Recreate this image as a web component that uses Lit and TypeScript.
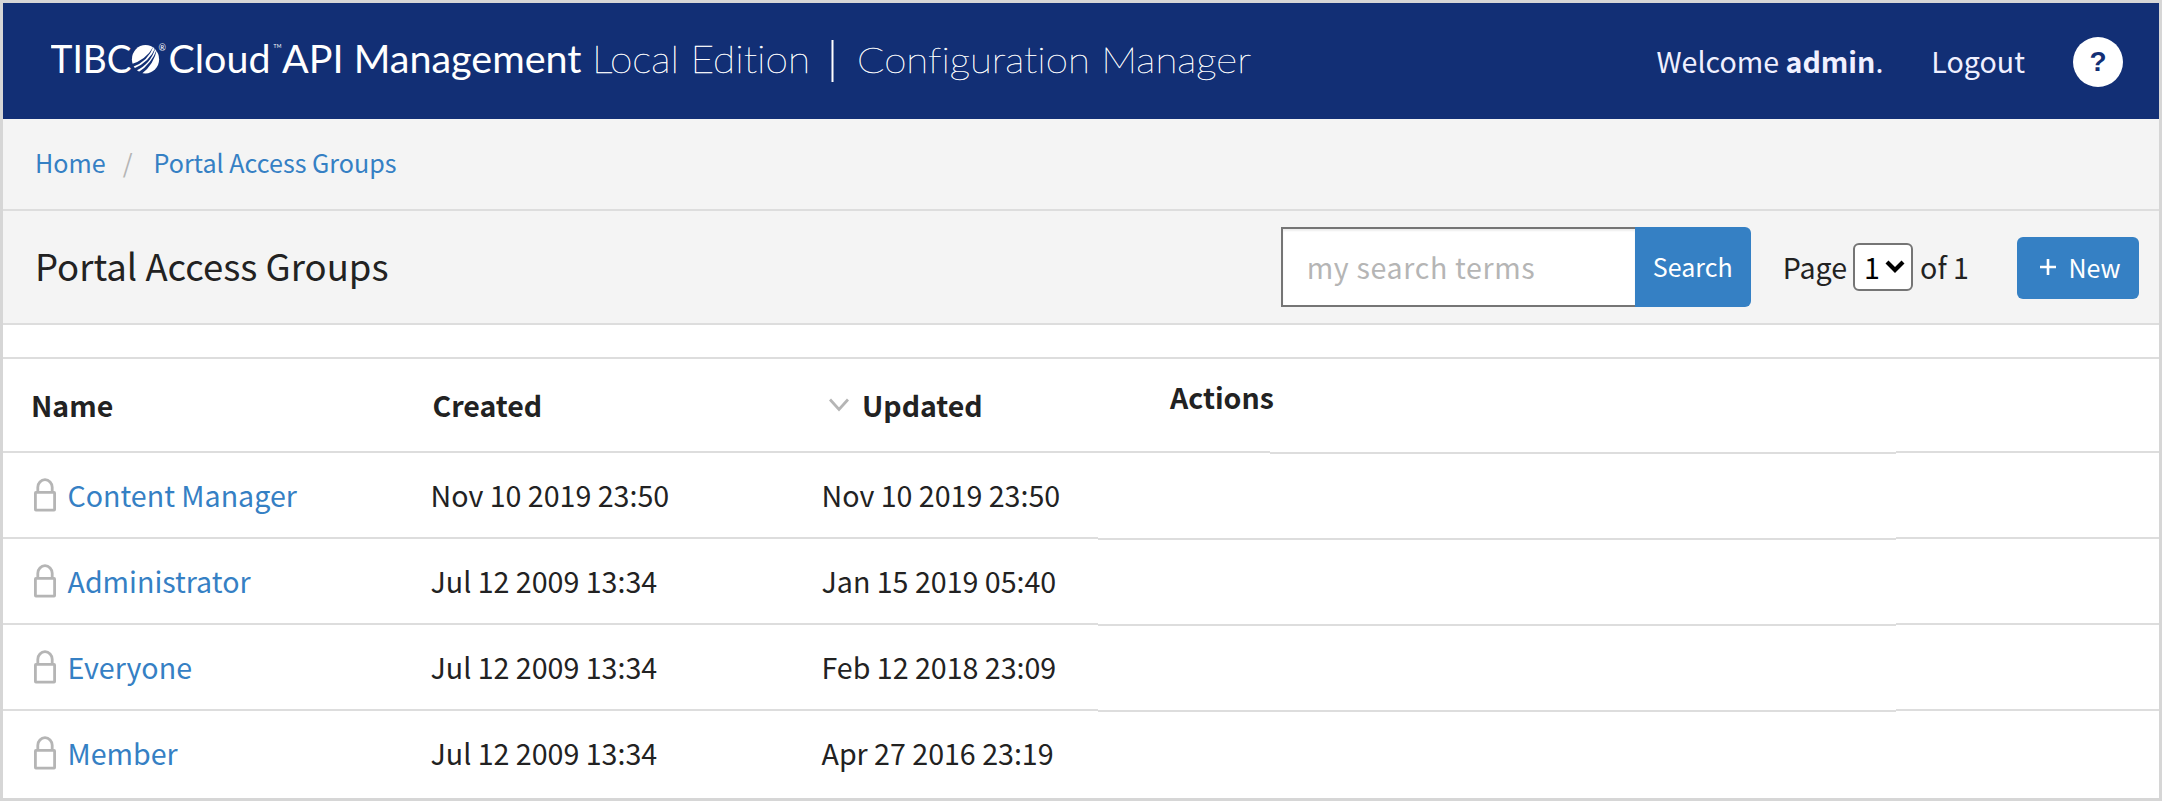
import { LitElement, html, css, svg } from "lit";
import { customElement } from "lit/decorators.js";

interface Row { name: string; created: string; updated: string }

const ROWS: Row[] = [
  { name: "Content Manager", created: "Nov 10 2019 23:50", updated: "Nov 10 2019 23:50" },
  { name: "Administrator", created: "Jul 12 2009 13:34", updated: "Jan 15 2019 05:40" },
  { name: "Everyone", created: "Jul 12 2009 13:34", updated: "Feb 12 2018 23:09" },
  { name: "Member", created: "Jul 12 2009 13:34", updated: "Apr 27 2016 23:19" },
];

@customElement("brand-logo")
export class BrandLogo extends LitElement {
  static styles = css`
    :host { display: block; margin-top: 4px; }
    svg { display: block; }
    .word { font-family: Lato, "Open Sans", sans-serif; fill: #fff; font-size: 38px; font-variant-ligatures: none; }
    .regular { font-weight: 400; }
    .thin { font-weight: 100; stroke: #fff; stroke-width: 0.45px; }
    .product { font-size: 36px; stroke-width: 0.4px; }
    .mark { font-family: Lato, sans-serif; fill: #fff; }
  `;
  render() {
    return html`<svg width="1220" height="60" viewBox="0 0 1220 60" role="img">
      ${svg`
      <text class="word regular" x="-0.500" y="40" textLength="81" lengthAdjust="spacingAndGlyphs">TIBC</text>
      <ellipse cx="94.500" cy="26.300" rx="13.600" ry="14.200" fill="#fff"/>
      <path d="M79.500 31.500 Q95 27 102.500 13.500 Q97 28.500 81.500 34 Z M82.500 35.800 Q98.500 29 104.500 14.500 Q100 31 84.500 38 Z M87 39.500 Q100.500 31 106 16 Q103 31.500 90.500 41 Z" fill="#122f75"/>
      <text class="mark" x="107.500" y="17.500" font-size="9">®</text>
      <text class="word regular" x="117.500" y="40" textLength="102" lengthAdjust="spacingAndGlyphs">Cloud</text>
      <text class="mark" x="222.500" y="15" font-size="5" textLength="8">TM</text>
      <text class="word regular" x="231" y="40" textLength="299.500" lengthAdjust="spacingAndGlyphs">API Management</text>
      <text class="word thin" x="541" y="40" textLength="218" lengthAdjust="spacingAndGlyphs">Local Edition</text>
      <rect x="780.500" y="7" width="2" height="42" fill="#fff"/>
      <text class="word thin product" x="806" y="40" textLength="394" lengthAdjust="spacingAndGlyphs">Configuration Manager</text>
      `}
    </svg>`;
  }
}

@customElement("app-root")
export class AppRoot extends LitElement {
  static styles = css`
    :host { display: block; box-sizing: border-box; width: 2162px; height: 801px; border: 3px solid #d6d6d6;
      background: #fff; color: #222; font-family: "Noto Sans CJK SC", "Open Sans", sans-serif; font-size: 28.6px; line-height: 40px; overflow: hidden; }
    * { box-sizing: border-box; }
    a { color: #3580c4; text-decoration: none; }
    .header { height: 116px; background: #122f75; color: #f0f0ff; display: flex; align-items: center; padding: 0 36px 0 48px; }
    .user { margin-left: auto; display: flex; align-items: center; }
    .user .logout { margin-left: 48px; color: #f0f0ff; }
    .help { margin: 2px 0 0 48px; width: 50px; height: 50px; border-radius: 50%; background: #fff; color: #122f75;
      font: bold 28px/50px "Liberation Sans", sans-serif; text-align: center; }
    .crumbs { height: 92px; background: #f4f4f4; border-bottom: 2px solid #ddd; display: flex; align-items: center; padding: 0 0 4px 32px; font-size: 25.1px; }
    .slash { color: #b5b5b5; margin: 0 21px 0 17px; }
    .titlebar { height: 114px; background: #f4f4f4; border-bottom: 2px solid #ddd; display: flex; align-items: center; padding: 0 20px 0 32px; }
    .title { font-size: 36.5px; font-weight: 400; margin: 0 auto 0 0; padding-bottom: 3px; }
    .search { display: flex; height: 80px; width: 470px; margin-right: 32px; }
    .input { flex: 1; border: 2px solid #757575; border-right: 0; background: #fff; color: #b5b5b5; padding: 18px 0 0 24px; letter-spacing: 0.65px; box-shadow: inset 0 2px 2px #eee; }
    .button { background: #3580c4; color: #fff; font-size: 25px; display: flex; align-items: center; justify-content: center; }
    .go { width: 116px; border-radius: 0 6px 6px 0; padding-bottom: 2px; }
    .select { width: 60px; height: 48px; border: 2px solid #757575; border-radius: 6px; background: #fff; color: #000; display: flex; align-items: center; padding-left: 9px; gap: 5px; margin: 0 7px 0 6px; }
    .page { display: flex; align-items: center; margin-right: 48px; }
    .new { width: 122px; height: 62px; border-radius: 6px; gap: 12px; margin-top: 2px; padding: 0 0 3px 5px; }
    .spacer { height: 34px; border-bottom: 2px solid #ddd; }
    .grid { display: grid; grid-template-columns: 1095px 172px 626px 1fr; }
    .row { display: contents; }
    .cells { height: 86px; border-bottom: 2px solid #ddd; display: grid; grid-template-columns: 427.5px 391px 1fr; align-items: center; }
    .line { height: 87px; margin-bottom: -1px; border-bottom: 2px solid #ddd; }
    .name { display: flex; align-items: center; padding-left: 30px; gap: 10.5px; }
    .head { height: 94px; font-weight: 700; font-size: 28.5px; grid-template-columns: 429.5px 390.5px 1fr; }
    .headline { height: 95px; }
    .flush { height: 86px; margin-bottom: 0; }
    .level { height: 94px; margin-bottom: 0; }
    .last { border-bottom-color: transparent; }
    .headcell { padding-left: 28px; }
    .updated { display: flex; align-items: center; gap: 13px; padding-left: 6px; }
    .actions { font-weight: 700; font-size: 28.5px; padding: 18px 0 0 72px; }
  `;

  private lock() {
    return html`<svg width="24" height="34" viewBox="0 0 24 34" fill="none" stroke="#b5b5b5" stroke-width="2.800">
      <rect x="2.400" y="14.400" width="19.200" height="17.700" rx="0.500"/><path d="M4.800 14V9.300a7.200 7.600 0 0 1 14.400 0V14"/></svg>`;
  }

  private row(r: Row, last: boolean) {
    const l = last ? "last" : "";
    return html`<div class="row">
      <div class="cells ${l}">
        <div class="name">${this.lock()}<a>${r.name}</a></div><div>${r.created}</div><div>${r.updated}</div>
      </div>
      <div class="line ${l}"></div><div class="line ${l}"></div><div class="line flush ${l}"></div>
    </div>`;
  }

  render() {
    return html`
      <header class="header">
        <brand-logo></brand-logo>
        <div class="user"><span>Welcome <b>admin</b>.</span><a class="logout">Logout</a><span class="help">?</span></div>
      </header>
      <nav class="crumbs"><a>Home</a><span class="slash">/</span><a>Portal Access Groups</a></nav>
      <section class="titlebar">
        <h1 class="title">Portal Access Groups</h1>
        <div class="search"><div class="input">my search terms</div><div class="button go">Search</div></div>
        <div class="page"><span>Page</span><span class="select">1<svg width="20" height="14" viewBox="0 0 20 14" fill="none" stroke="#000" stroke-width="4.200"><path d="M2 2l8 8 8-8"/></svg></span><span>of 1</span></div>
        <div class="button new"><svg width="16" height="16" viewBox="0 0 16 16" stroke="#fff" stroke-width="2.600"><path d="M0 8H16M8 0V16"/></svg><span>New</span></div>
      </section>
      <div class="spacer"></div>
      <main class="grid">
        <div class="row">
          <div class="cells head"><div class="headcell">Name</div><div>Created</div>
            <div class="updated"><svg width="20" height="14" viewBox="0 0 20 14" fill="none" stroke="#b5b5b5" stroke-width="2.800"><path d="M1 1.500l9 10 9-10"/></svg>Updated</div></div>
          <div class="line level actions">Actions</div><div class="line headline"></div><div class="line level"></div>
        </div>
        ${ROWS.map((r, i) => this.row(r, i === ROWS.length - 1))}
      </main>`;
  }
}
